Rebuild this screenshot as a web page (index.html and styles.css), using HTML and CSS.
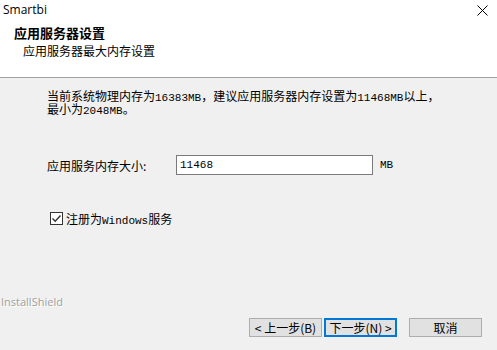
FILE: index.html
```html
<!DOCTYPE html>
<html>
<head>
<meta charset="utf-8">
<link rel="stylesheet" href="styles.css">
</head>
<body>
<div class="window">
  <div class="header">
    <div class="titlebar">
      <span class="app-title">Smartbi</span>
      <svg class="close" width="11" height="11" viewBox="0 0 11 11"><path d="M0.5 0.5 L10.5 10.5 M10.5 0.5 L0.5 10.5" stroke="#000" stroke-width="1" fill="none"/></svg>
    </div>
    <div class="heading">应用服务器设置</div>
    <div class="subheading">应用服务器最大内存设置</div>
  </div>
  <div class="content">
    <div class="info">
      <div class="line">当前系统物理内存为<span class="a">16383MB</span>，建议应用服务器内存设置为<span class="a">11468MB</span>以上，</div>
      <div class="line">最小为<span class="a">2048MB</span>。</div>
    </div>
    <div class="mem-row">
      <span class="mem-label">应用服务内存大小:</span>
      <div class="mem-input"><span class="a">11468</span></div>
      <span class="unit a">MB</span>
    </div>
    <label class="check-row">
      <span class="checkbox"><svg width="11" height="11" viewBox="0 0 11 11"><path d="M1.5 5.5 L4.2 8.2 L9.5 2.5" stroke="#333" stroke-width="1.4" fill="none"/></svg></span>
      <span>注册为<span class="a">Windows</span>服务</span>
    </label>
  </div>
  <div class="footer">
    <div class="brand">InstallShield</div>
    <div class="buttons">
      <div class="btn">&lt; 上一步(B)</div>
      <div class="btn primary">下一步(N) &gt;</div>
      <div class="btn cancel">取消</div>
    </div>
  </div>
</div>
</body>
</html>
```
FILE: styles.css
```css
html, body {
  margin: 0;
  padding: 0;
}
body {
  width: 497px;
  height: 350px;
  background: #f0f0f0;
  font-family: "Noto Sans CJK SC", sans-serif;
  font-size: 12px;
  color: #000;
  overflow: hidden;
}
.window {
  display: flex;
  flex-direction: column;
  height: 350px;
}
.header {
  background: #fff;
  height: 77px;
  border-bottom: 1px solid #a0a0a0;
  box-sizing: content-box;
  flex: none;
}
.titlebar {
  display: flex;
  justify-content: space-between;
  align-items: flex-start;
  height: 22px;
}
.app-title {
  font-family: "Open Sans", "Noto Sans", sans-serif;
  font-size: 12px;
  line-height: 20px;
  padding-left: 3px;
}
.close {
  margin-top: 5px;
  margin-right: 9px;
}
.heading {
  font-weight: bold;
  font-size: 13px;
  line-height: 16px;
  padding-left: 14px;
  margin-top: 3px;
}
.subheading {
  font-size: 12px;
  line-height: 16px;
  padding-left: 23px;
  margin-top: 2px;
}
.a {
  font-family: "Liberation Mono", monospace;
  font-size: 11px;
}
.content {
  padding-left: 47px;
  padding-top: 11px;
  flex: 1;
}
.info {
  height: 26px;
}
.line {
  height: 13px;
  line-height: 13px;
  white-space: nowrap;
}
.mem-row {
  display: flex;
  align-items: center;
  margin-top: 40px;
  height: 20px;
}
.mem-label {
  width: 129px;
}
.mem-input {
  width: 192px;
  height: 18px;
  border: 1px solid #7a7a7a;
  background: #fff;
  display: flex;
  align-items: center;
  padding-left: 3px;
  box-sizing: content-box;
}
.unit {
  margin-left: 7px;
}
.check-row {
  display: flex;
  align-items: center;
  height: 13px;
  margin-top: 37px;
  margin-left: 3px;
  gap: 3px;
}
.checkbox {
  width: 11px;
  height: 11px;
  border: 1px solid #333;
  background: #fff;
  display: flex;
}
.footer {
  flex: none;
  height: 57px;
}
.brand {
  font-family: "Open Sans", "Noto Sans", sans-serif;
  font-size: 11px;
  color: #a0a0a0;
  text-shadow: 1px 1px 0 #fff;
  padding-left: 1px;
  margin-top: 2px;
  line-height: 14px;
}
.buttons {
  display: flex;
  margin-top: 9px;
  margin-left: 249px;
}
.btn {
  width: 71px;
  height: 17px;
  background: #e1e1e1;
  border: 1px solid #adadad;
  display: flex;
  align-items: center;
  justify-content: center;
  font-size: 12px;
  box-sizing: content-box;
}
.btn.primary {
  border: 2px solid #0078d7;
  width: 69px;
  height: 15px;
  margin-left: 2px;
}
.btn.cancel {
  margin-left: 12px;
}
```
